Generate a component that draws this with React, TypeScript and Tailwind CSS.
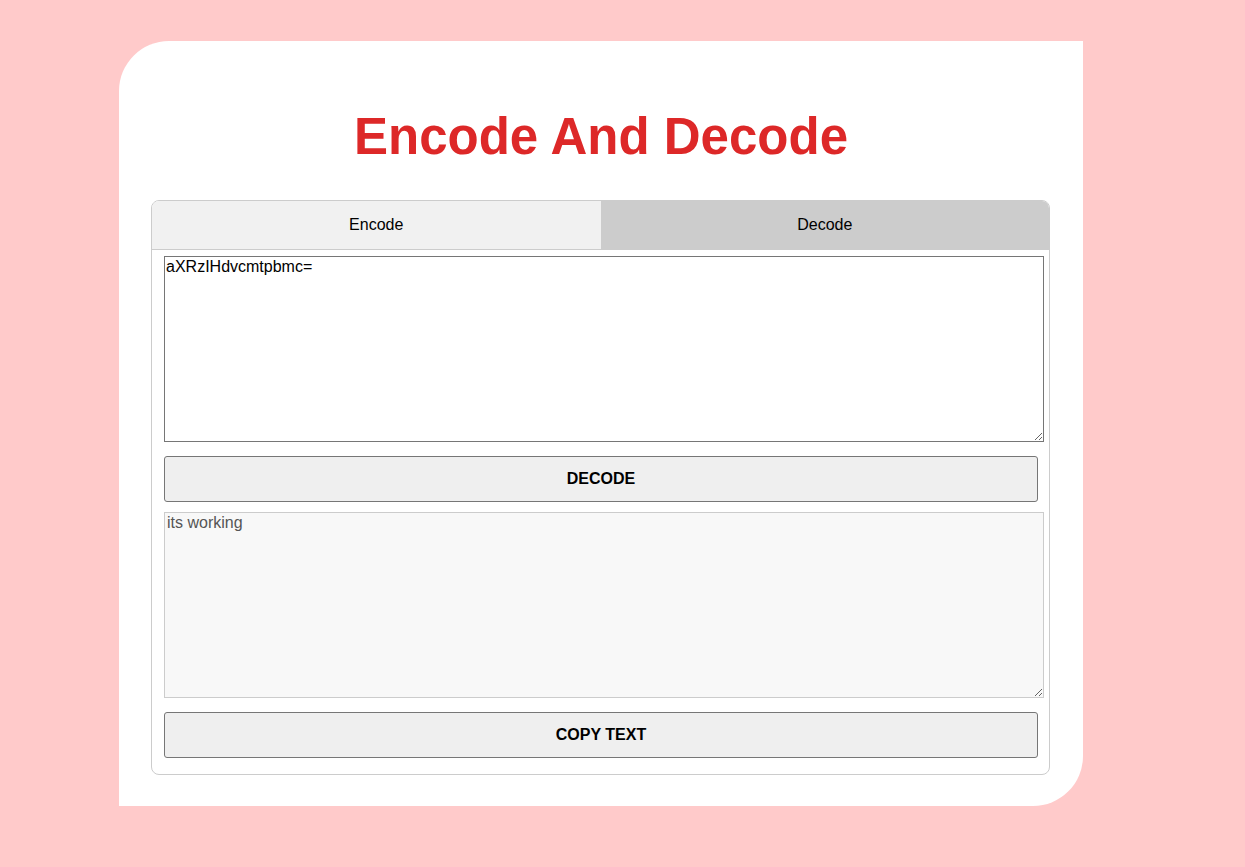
import { useState } from "react";

export default function App() {
  const [tab, setTab] = useState<"encode" | "decode">("decode");
  const [input, setInput] = useState("aXRzIHdvcmtpbmc=");

  let output = "";
  try {
    output = tab === "decode" ? atob(input) : btoa(input);
  } catch {
    output = "";
  }

  return (
    <div className="min-h-screen bg-[#ffcaca] pt-[41px] pl-[119px] font-['Liberation_Sans',Arial,sans-serif]">
      <div className="w-[964px] h-[765px] bg-white rounded-tl-[50px] rounded-br-[50px] px-[32px] pt-[70px]">
        <h1 className="text-center text-[51px] leading-none font-bold text-[#dd2828] mb-[38px]">
          Encode And Decode
        </h1>

        <div className="w-[899px] border border-[#cccccc] rounded-[8px] overflow-hidden">
          <div className="flex h-[49px] border-b border-[#cccccc]">
            <button
              onClick={() => setTab("encode")}
              className="flex-1 bg-[#f1f1f1] text-[16px] text-black"
            >
              Encode
            </button>
            <button
              onClick={() => setTab("decode")}
              className="flex-1 bg-[#cccccc] text-[16px] text-black"
            >
              Decode
            </button>
          </div>

          <div className="pl-[12px] pt-[6px] pb-[16px] flex flex-col">
            <textarea
              value={input}
              onChange={(e) => setInput(e.target.value)}
              spellCheck
              className="w-[880px] h-[186px] border border-[#767676] px-[1px] py-[1px] text-[16px] leading-[18px] text-black outline-none resize"
            />
            <button className="mt-[14px] w-[874px] h-[46px] bg-[#efefef] border border-[#767676] rounded-[3px] text-[16px] font-bold text-black uppercase">
              {tab === "decode" ? "Decode" : "Encode"}
            </button>
            <textarea
              value={output}
              readOnly
              className="mt-[10px] w-[880px] h-[186px] border border-[#cccccc] bg-[#f8f8f8] px-[2px] py-[1px] text-[16px] leading-[18px] text-[#555555] outline-none resize"
            />
            <button
              onClick={() => navigator.clipboard?.writeText(output)}
              className="mt-[14px] w-[874px] h-[46px] bg-[#efefef] border border-[#767676] rounded-[3px] text-[16px] font-bold text-black"
            >
              COPY TEXT
            </button>
          </div>
        </div>
      </div>
    </div>
  );
}
